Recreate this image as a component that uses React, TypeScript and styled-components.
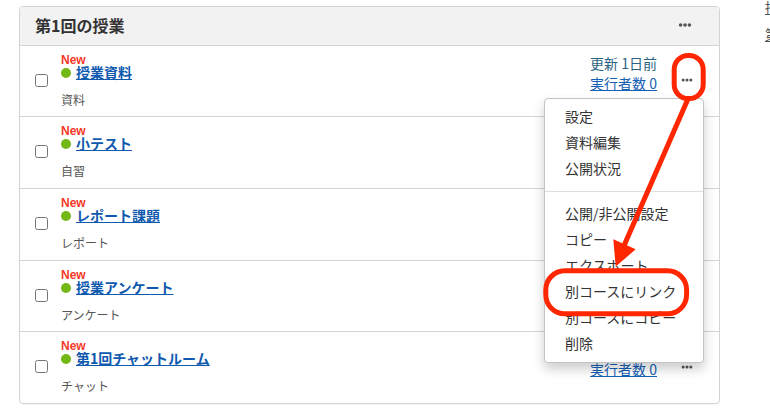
import React from "react";
import styled, { createGlobalStyle } from "styled-components";

const GlobalStyle = createGlobalStyle`
  *, *::before, *::after { box-sizing: border-box; }
  body {
    margin: 0;
    background: #fff;
    color: #2b2b2b;
    font-family: "Noto Sans CJK JP", sans-serif;
    font-size: 14px;
    overflow: hidden;
  }
`;

const Page = styled.div`
  display: grid;
  grid-template-columns: minmax(0, 1fr) 5px;
  column-gap: 45px;
  padding: 6px 0 6px 19px;
`;

const Panel = styled.section`
  border: 1px solid #d4d4d4;
  border-radius: 4px;
  box-shadow: 0 1px 1px rgba(0, 0, 0, 0.05);
`;

const PanelHeader = styled.header`
  display: flex;
  align-items: center;
  justify-content: space-between;
  height: 39px;
  padding: 0 18px 2px 15px;
  background: #f2f2f2;
  border-bottom: 1px solid #d4d4d4;
  border-radius: 3px 3px 0 0;
`;

const PanelTitle = styled.h2`
  margin: 0;
  color: #333;
  font-size: 16px;
  line-height: 20px;
  font-weight: 700;
`;

const Rows = styled.ul`
  margin: 0;
  padding: 0;
  list-style: none;
`;

const Row = styled.li`
  display: grid;
  grid-template-columns: 13px minmax(0, 1fr) auto 32px;
  align-items: center;
  min-height: 72px;
  padding: 0 16px 2px 15px;
  border-bottom: 1px solid #d4d4d4;

  &:nth-child(3n + 1) { min-height: 71px; }
  &:last-child { min-height: 71px; border-bottom: 0; }
`;

const Check = styled.input`
  width: 13px;
  height: 13px;
  margin: 0;
`;

const Content = styled.div`
  display: flex;
  flex-direction: column;
  align-self: start;
  padding: 8px 0 0 13px;
`;

const NewLabel = styled.span`
  color: #f5392b;
  font-family: "Liberation Sans", sans-serif;
  font-size: 12px;
  line-height: 12px;
  font-weight: 700;
`;

const TitleLine = styled.div`
  display: flex;
  align-items: flex-end;
  gap: 5px;
  line-height: 12px;
`;

const Status = styled.span`
  width: 10px;
  height: 10px;
  border-radius: 50%;
  background: #73b816;
`;

const TitleLink = styled.a`
  color: #0f59ae;
  font-weight: 700;
`;

const Kind = styled.span`
  margin-top: 14px;
  color: #555;
  font-size: 12px;
  line-height: 16px;
`;

const Meta = styled.div`
  display: flex;
  flex-direction: column;
  align-items: flex-end;
  justify-content: flex-end;
  align-self: start;
  min-height: 47px;
  margin-right: 14px;
  line-height: 20px;
`;

const Updated = styled.span`
  color: #2b6482;
`;

const MetaLink = styled.a`
  color: #1560b4;
`;

const MoreWrap = styled.div`
  position: relative;
  grid-column: 4;
`;

const MoreButton = styled.button`
  display: flex;
  align-items: center;
  justify-content: center;
  width: 32px;
  height: 32px;
  padding: 0;
  border: 0;
  background: transparent;
  color: #555;
`;

const Menu = styled.ul`
  position: absolute;
  z-index: 1;
  top: 34px;
  right: -1px;
  width: 160px;
  margin: 0;
  padding: 4px 0 6px;
  list-style: none;
  background: #fff;
  border: 1px solid #c4c4c4;
  border-radius: 4px;
  box-shadow: 0 6px 12px rgba(0, 0, 0, 0.2);
`;

const MenuButton = styled.button`
  display: block;
  width: 100%;
  height: 26px;
  padding: 0 20px;
  border: 0;
  background: transparent;
  color: #333;
  font: inherit;
  line-height: 26px;
  text-align: left;
  white-space: nowrap;
`;

const Divider = styled.li`
  height: 1px;
  margin: 10px 0 8px;
  background: #dedede;
`;

const Callout = styled.svg`
  position: absolute;
  z-index: 2;
  top: -14px;
  left: -131px;
  pointer-events: none;
`;

const Side = styled.aside`
  display: flex;
  flex-direction: column;
  gap: 7px;
  line-height: 20px;
  margin-top: -9px;
  white-space: nowrap;
`;

const SideLink = styled.a`
  color: #555;
`;

function Dots({ large = false }: { large?: boolean }) {
  const step = large ? 4.4 : 3.8;
  const r = large ? 1.8 : 1.5;
  return (
    <svg width="16" height="8" viewBox="0 0 16 8" fill="currentColor" aria-hidden="true">
      <circle cx={8 - step} cy="4" r={r} />
      <circle cx="8" cy="4" r={r} />
      <circle cx={8 + step} cy="4" r={r} />
    </svg>
  );
}

const menuGroups = [
  ["設定", "資料編集", "公開状況"],
  ["公開/非公開設定", "コピー", "エクスポート", "別コースにリンク", "別コースにコピー", "削除"],
];

function ActionMenu() {
  return (
    <>
      <Menu>
        {menuGroups.map((group, index) => (
          <React.Fragment key={index}>
            {index > 0 && <Divider role="separator" />}
            {group.map((label) => (
              <li key={label}>
                <MenuButton type="button">{label}</MenuButton>
              </li>
            ))}
          </React.Fragment>
        ))}
      </Menu>
      <Callout width="170" height="270" viewBox="540 50 170 270" fill="none" stroke="#ff2600" strokeWidth="5" aria-hidden="true">
        <rect x="674.2" y="55.5" width="29" height="43" rx="14" />
        <rect x="545.8" y="270.8" width="140.8" height="43" rx="19" />
        <path d="M687.5 100 L623 248" />
        <path d="M613.3 239.3 L635.7 249.3 L615.7 266.5 Z" fill="#ff2600" stroke="none" />
      </Callout>
    </>
  );
}

interface Lesson {
  title: string;
  kind: string;
  updated?: string;
  runners?: string;
  more?: boolean;
  open?: boolean;
}

const lessons: Lesson[] = [
  { title: "授業資料", kind: "資料", updated: "更新 1日前", runners: "実行者数 0", more: true, open: true },
  { title: "小テスト", kind: "自習" },
  { title: "レポート課題", kind: "レポート" },
  { title: "授業アンケート", kind: "アンケート" },
  { title: "第1回チャットルーム", kind: "チャット", runners: "実行者数 0", more: true },
];

function LessonRow({ lesson }: { lesson: Lesson }) {
  return (
    <Row>
      <Check type="checkbox" aria-label={lesson.title} />
      <Content>
        <NewLabel>New</NewLabel>
        <TitleLine>
          <Status />
          <TitleLink href="#">{lesson.title}</TitleLink>
        </TitleLine>
        <Kind>{lesson.kind}</Kind>
      </Content>
      {lesson.runners && (
        <Meta>
          {lesson.updated && <Updated>{lesson.updated}</Updated>}
          <MetaLink href="#">{lesson.runners}</MetaLink>
        </Meta>
      )}
      {lesson.more && (
        <MoreWrap>
          <MoreButton type="button" aria-label="メニュー" aria-expanded={Boolean(lesson.open)}>
            <Dots />
          </MoreButton>
          {lesson.open && <ActionMenu />}
        </MoreWrap>
      )}
    </Row>
  );
}

export default function App() {
  return (
    <>
      <GlobalStyle />
      <Page>
        <Panel>
          <PanelHeader>
            <PanelTitle>第1回の授業</PanelTitle>
            <MoreButton type="button" aria-label="メニュー">
              <Dots large />
            </MoreButton>
          </PanelHeader>
          <Rows>
            {lessons.map((lesson) => (
              <LessonRow key={lesson.title} lesson={lesson} />
            ))}
          </Rows>
        </Panel>
        <Side>
          <SideLink href="#">授</SideLink>
          <SideLink href="#">第</SideLink>
        </Side>
      </Page>
    </>
  );
}
